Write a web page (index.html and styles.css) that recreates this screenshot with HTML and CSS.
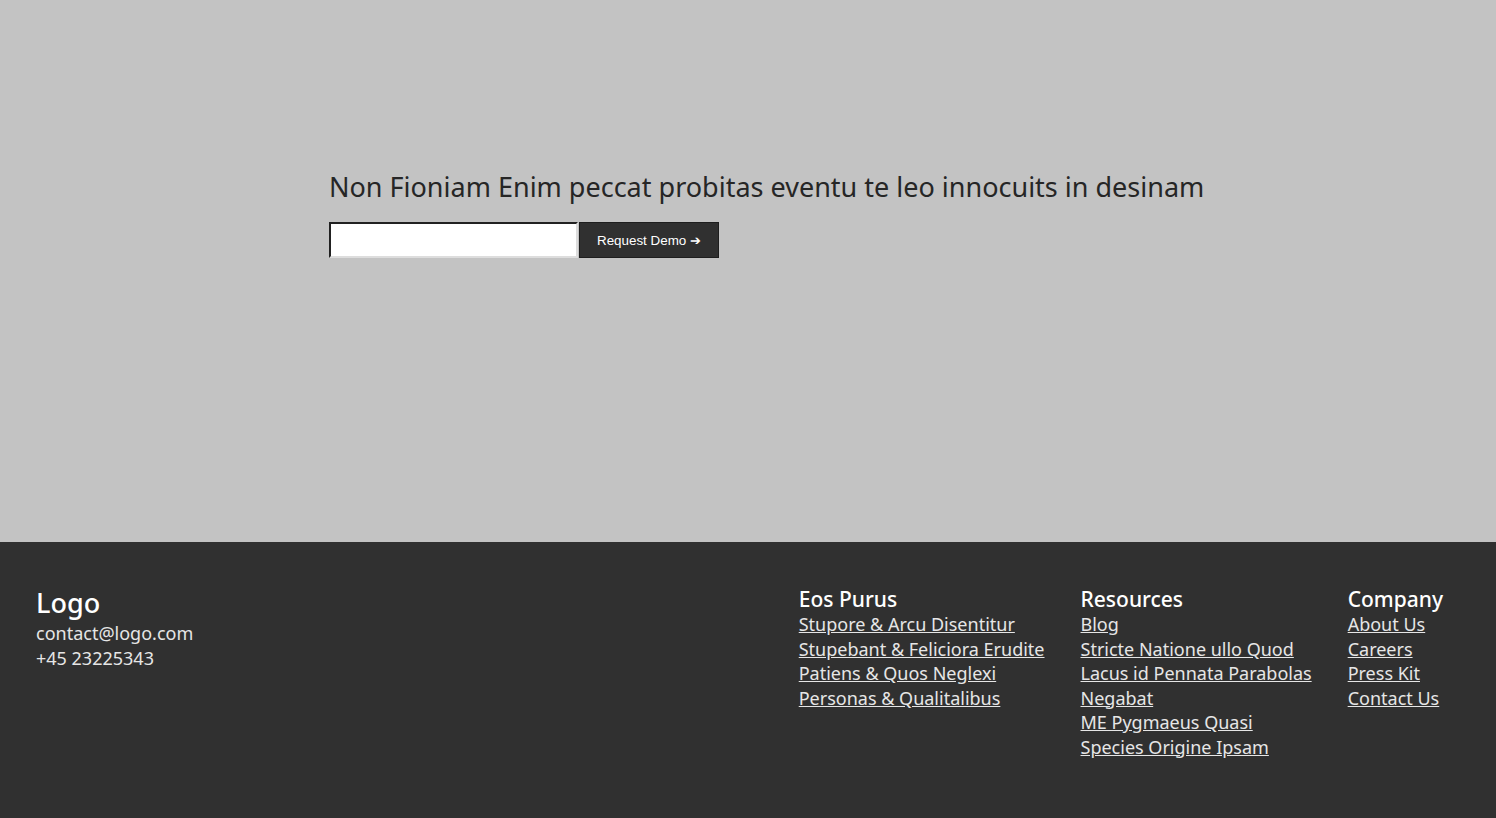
FILE: index.html
```html
<!DOCTYPE html>
<html lang="en">
<head>
<meta charset="utf-8">
<title>Landing</title>
<link rel="stylesheet" href="styles.css">
</head>
<body>
<section class="hero">
  <div class="hero-inner">
    <h1 class="hero-title">Non Fioniam Enim peccat probitas eventu te leo innocuits in desinam</h1>
    <form class="demo-form">
      <input class="demo-input" type="email">
      <button class="demo-button" type="button">Request Demo ➔</button>
    </form>
  </div>
</section>
<footer class="footer">
  <div class="brand">
    <div class="brand-logo">Logo</div>
    <div class="brand-line">contact@logo.com</div>
    <div class="brand-line">+45 23225343</div>
  </div>
  <nav class="footer-nav">
    <div class="col">
      <h3 class="col-title">Eos Purus</h3>
      <a href="#" class="col-link">Stupore &amp; Arcu Disentitur</a>
      <a href="#" class="col-link">Stupebant &amp; Feliciora Erudite</a>
      <a href="#" class="col-link">Patiens &amp; Quos Neglexi</a>
      <a href="#" class="col-link">Personas &amp; Qualitalibus</a>
    </div>
    <div class="col">
      <h3 class="col-title">Resources</h3>
      <a href="#" class="col-link">Blog</a>
      <a href="#" class="col-link">Stricte Natione ullo Quod</a>
      <a href="#" class="col-link">Lacus id Pennata Parabolas</a>
      <a href="#" class="col-link">Negabat</a>
      <a href="#" class="col-link">ME Pygmaeus Quasi</a>
      <a href="#" class="col-link">Species Origine Ipsam</a>
    </div>
    <div class="col">
      <h3 class="col-title">Company</h3>
      <a href="#" class="col-link">About Us</a>
      <a href="#" class="col-link">Careers</a>
      <a href="#" class="col-link">Press Kit</a>
      <a href="#" class="col-link">Contact Us</a>
    </div>
  </nav>
</footer>
</body>
</html>
```
FILE: styles.css
```css
* { box-sizing: border-box; }
html, body { margin: 0; padding: 0; }
body {
  font-family: "Noto Sans", "Open Sans", sans-serif;
  background: #303030;
  width: 1496px;
  height: 818px;
  overflow: hidden;
}
.hero {
  background: #c3c3c3;
  height: 542px;
  padding-top: 167px;
}
.hero-inner {
  width: 838px;
  margin: 0 auto;
}
.hero-title {
  margin: 0;
  font-size: 27px;
  font-weight: 400;
  line-height: 40px;
  color: #262626;
  white-space: nowrap;
}
.demo-form {
  display: flex;
  margin-top: 15px;
}
.demo-input {
  width: 249px;
  height: 36px;
  margin: 0;
  background: #fff;
  border: 2px inset #767676;
  border-right-color: #ddd;
  border-bottom-color: #ddd;
  padding: 0 4px;
}
.demo-button {
  width: 140px;
  height: 36px;
  margin: 0 0 0 1px;
  background: #303030;
  color: #fff;
  border: 1px solid #1e1e1e;
  font-family: "Liberation Sans", Arial, sans-serif;
  font-size: 13.4px;
  cursor: pointer;
}
.footer {
  height: 276px;
  display: flex;
  justify-content: space-between;
  padding: 44px 53px 0 36px;
  color: #e6e6e6;
}
.brand {
  margin-top: -1px;
}
.brand-logo {
  font-size: 27px;
  font-weight: 500;
  color: #fff;
  line-height: 36px;
}
.brand-line {
  font-size: 18px;
  line-height: 24.5px;
}
.footer-nav {
  display: flex;
  gap: 36px;
}
.col {
  display: flex;
  flex-direction: column;
  align-items: flex-start;
}
.col-title {
  margin: 0;
  font-size: 21px;
  font-weight: 500;
  line-height: 26px;
  color: #fff;
}
.col-link {
  font-size: 18px;
  line-height: 24.5px;
  color: #e6e6e6;
  text-decoration: underline;
}
```
